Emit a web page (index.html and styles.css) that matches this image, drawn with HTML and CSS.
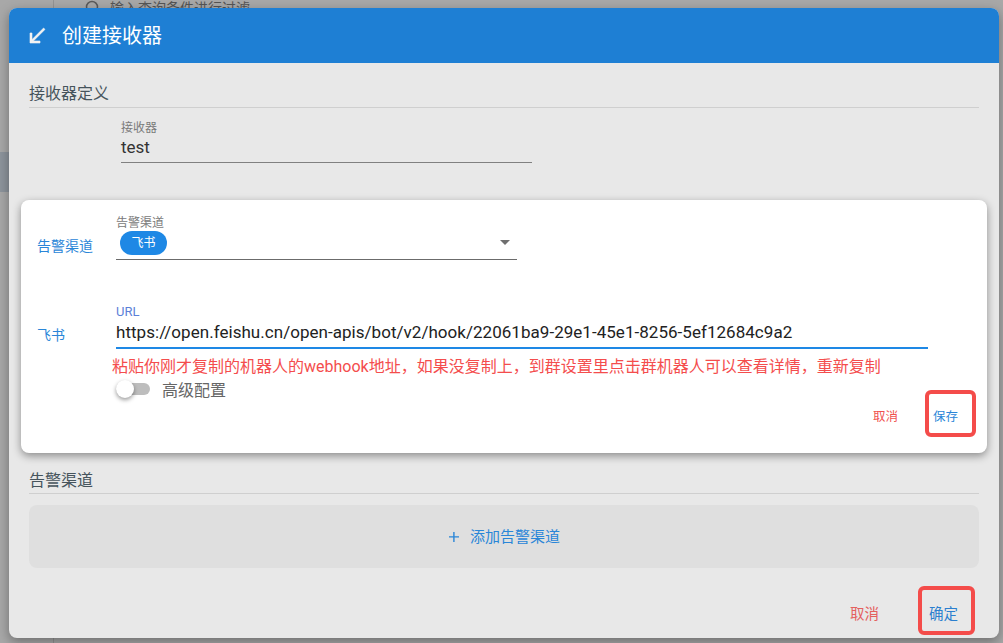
FILE: index.html
```html
<!DOCTYPE html>
<html lang="zh">
<head>
<meta charset="utf-8">
<title>创建接收器</title>
<link rel="stylesheet" href="styles.css">
</head>
<body>
<div class="backdrop">
  <div class="bg-search">
    <svg class="bg-icon" width="16" height="16" viewBox="0 0 16 16"><circle cx="7" cy="7" r="5.500" fill="none" stroke="#5a5a5a" stroke-width="1.500"/></svg>
    <span>输入查询条件进行过滤</span>
  </div>
  <div class="bg-stripe"></div>
  <div class="bg-rule"></div>
</div>
<main class="dialog">
  <header class="dialog-head">
    <svg class="head-icon" width="24" height="24" viewBox="0 0 24 24"><path d="M20 5.400 18.600 4 7 15.600V9H5v10h10v-2H8.400z" fill="#f2f2f2" stroke="#f2f2f2" stroke-width=".6"/></svg>
    <h1 class="head-title">创建接收器</h1>
  </header>
  <div class="dialog-body">
    <section class="def">
      <h2 class="section-title">接收器定义</h2>
      <div class="field name-field">
        <label class="field-label">接收器</label>
        <div class="field-value">test</div>
      </div>
    </section>
    <section class="card">
      <div class="row row-channel">
        <div class="row-label">告警渠道</div>
        <div class="select">
          <label class="field-label">告警渠道</label>
          <div class="select-box">
            <span class="chip">飞书</span>
            <span class="caret"></span>
          </div>
        </div>
      </div>
      <div class="row row-url">
        <div class="row-label">飞书</div>
        <div class="url">
          <label class="field-label url-label">URL</label>
          <div class="url-value">https://open.feishu.cn/open-apis/bot/v2/hook/22061ba9-29e1-45e1-8256-5ef12684c9a2</div>
        </div>
      </div>
      <p class="note">粘贴你刚才复制的机器人的webhook地址，如果没复制上，到群设置里点击群机器人可以查看详情，重新复制</p>
      <div class="switch-row">
        <span class="switch"><span class="thumb"></span></span>
        <span class="switch-text">高级配置</span>
      </div>
      <div class="card-actions">
        <button class="btn btn-cancel">取消</button>
        <button class="btn btn-save marked">保存</button>
      </div>
    </section>
    <section class="channels">
      <h2 class="section-title">告警渠道</h2>
      <div class="add-box">
        <svg class="plus" width="12" height="12" viewBox="0 0 12 12"><path d="M5.200 1h1.400v4.200H11v1.400H6.600V11H5.200V6.600H1V5.200h4.200z" fill="#2a86d8"/></svg>
        <span>添加告警渠道</span>
      </div>
    </section>
    <footer class="dialog-actions">
      <button class="btn btn-cancel big">取消</button>
      <button class="btn btn-save big marked">确定</button>
    </footer>
  </div>
</main>
</body>
</html>
```

FILE: styles.css
```css
* { box-sizing: border-box; }
html, body { margin: 0; height: 100%; }
body {
  width: 1003px;
  height: 643px;
  overflow: hidden;
  position: relative;
  background: #a8a8a8;
  font-family: Roboto, "Noto Sans CJK SC", sans-serif;
  padding: 8px 4px 5px 9px;
}
.backdrop { position: absolute; inset: 0; background: #a8a8a8; }
.bg-search {
  position: absolute;
  left: 85px; top: 0;
  display: flex; align-items: center; gap: 9px;
  font-size: 14px; color: #555;
  height: 16px;
  line-height: 16px;
}
.bg-stripe { position: absolute; left: 0; top: 152px; width: 9px; height: 40px; background: #8d949c; }
.bg-rule { position: absolute; left: 53px; top: 0; bottom: 0; width: 1px; background: #939393; }
.dialog {
  position: relative;
  height: 630px;
  width: 990px;
  border-radius: 8px;
  background: #e8e8e8;
  overflow: hidden;
  box-shadow: 0 4px 12px rgba(0,0,0,.35);
  display: flex;
  flex-direction: column;
}
.dialog-head {
  height: 55px;
  flex: none;
  background: #1e7fd4;
  display: flex;
  align-items: center;
  padding-left: 16px;
  color: #fff;
}
.head-icon { margin-right: 13px; }
.head-title { margin: 0; font-size: 20px; font-weight: 400; line-height: 28px; }
.dialog-body { flex: 1; display: flex; flex-direction: column; padding: 0 12px; }
.def { padding: 20px 8px 0; height: 137px; flex: none; }
.section-title {
  margin: 0;
  font-size: 16px;
  font-weight: 400;
  color: #46545c;
  line-height: 22px;
  height: 25px;
  border-bottom: 1px solid #cfcfcf;
}
.field { margin-left: 92px; width: 411px; }
.name-field { margin-top: 11px; border-bottom: 1px solid #808080; height: 44px; }
.field-label { display: block; font-size: 12px; line-height: 16px; color: #7a7a7a; position: relative; top: 1px; }
.field-value { font-size: 17px; line-height: 22px; color: #333; margin-top: 1px; }
.card {
  height: 253px;
  flex: none;
  background: #fff;
  border-radius: 8px;
  box-shadow: 0 3px 8px rgba(0,0,0,.4);
  position: relative;
  padding: 15px 0 0 16px;
}
.row { display: flex; }
.row-label { width: 79px; flex: none; font-size: 14px; color: #2a86d8; line-height: 18px; }
.row-channel .row-label { margin-top: 22px; }
.select { width: 401px; }
.select .field-label { line-height: 14px; }
.select-box {
  height: 31px;
  border-bottom: 1px solid #6b6b6b;
  padding-left: 4px;
  display: flex;
  align-items: flex-start;
  justify-content: space-between;
}
.chip {
  width: 47px; height: 24px;
  margin-top: 2px;
  border-radius: 12px;
  background: #1e88e5;
  color: #fff;
  font-size: 12px;
  line-height: 24px;
  text-align: center;
}
.caret {
  width: 0; height: 0;
  margin: 11px 7px 0 0;
  border-left: 5px solid transparent;
  border-right: 5px solid transparent;
  border-top: 5px solid #6f6f6f;
}
.row-url { margin-top: 45px; }
.row-url .row-label { margin-top: 21px; }
.url { width: 812px; border-bottom: 2px solid #1e88e5; height: 44px; }
.url-label { color: #5c7fd8; line-height: 14px; font-size: 13px; top: 0; }
.url-value { font-size: 17px; letter-spacing: .035px; line-height: 24px; color: #222; white-space: nowrap; margin-top: 1px; }
.note { margin: 8px 0 0 75px; font-size: 16px; line-height: 20px; color: #f44d4d; white-space: nowrap; }
.switch-row { display: flex; align-items: center; margin: 1px 0 0 79px; height: 22px; }
.switch { position: relative; width: 34px; height: 12px; border-radius: 6px; background: #bdbdbd; margin-right: 12px; display: block; }
.thumb { position: absolute; left: 0; top: -3px; width: 18px; height: 18px; border-radius: 50%; background: #fff; box-shadow: 0 2px 4px rgba(0,0,0,.4); }
.switch-text { font-size: 16px; line-height: 22px; color: #666; position: relative; top: 2px; }
.card-actions { position: absolute; right: 11px; top: 190px; display: flex; align-items: center; gap: 27px; }
.btn { border: 0; background: none; padding: 4px 0 0; font-family: inherit; font-size: 12.500px; }
.btn-cancel { color: #f0524f; }
.btn-save { color: #2a86d8; }
.marked { border: 4px solid #f44c4a; border-radius: 6px; text-align: left; }
.card-actions .btn-save { width: 51px; height: 47px; padding-left: 4px; }
.channels { padding: 17px 8px 0; height: 115px; flex: none; }
.channels .section-title { height: 24px; }
.add-box {
  margin-top: 11px;
  height: 63px;
  border-radius: 8px;
  background: #dfdfdf;
  display: flex;
  align-items: center;
  justify-content: center;
  gap: 10px;
  font-size: 15px;
  line-height: 20px;
  color: #2a86d8;
}
.dialog-actions { display: flex; justify-content: flex-end; align-items: center; padding: 18px 12px 0 0; gap: 39px; }
.btn.big { font-size: 14.500px; }
.dialog-actions .btn-save { width: 57px; height: 49px; padding-left: 7px; }
.dialog-actions .btn-cancel { color: #e4605e; }
.dialog-actions .btn-save { color: #2b7fcf; }
```
